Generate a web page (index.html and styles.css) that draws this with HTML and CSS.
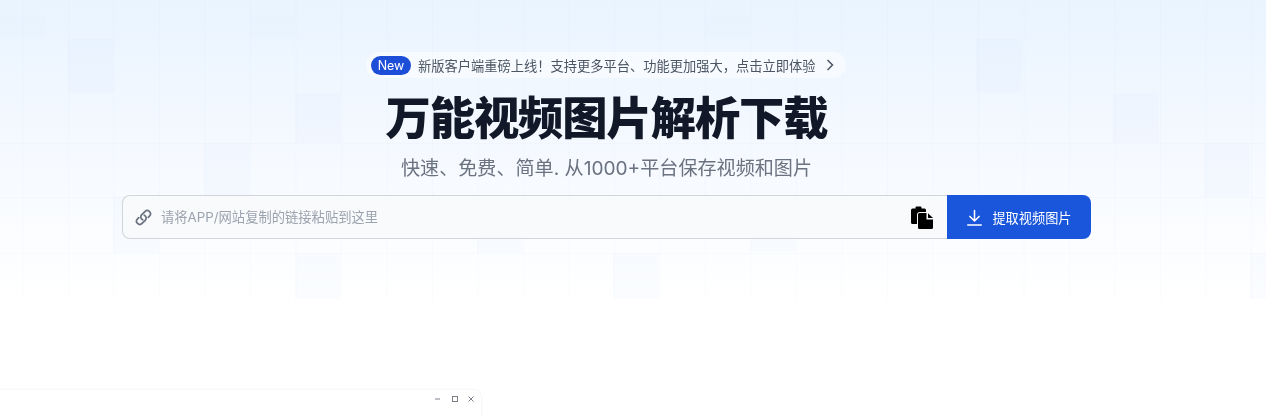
FILE: index.html
```html
<!DOCTYPE html>
<html lang="zh-CN">
<head>
    <meta charset="UTF-8">
    <meta name="viewport" content="width=device-width, initial-scale=1.0">
    <title>万能视频图片解析下载</title>
    <link rel="stylesheet" href="styles.css">
</head>
<body>

<section class="hero">
    <div class="hero-inner">
        <a class="notice" href="#">
            <span class="notice-badge">New</span>
            <span class="notice-text">新版客户端重磅上线！支持更多平台、功能更加强大，点击立即体验</span>
            <svg class="notice-arrow" viewBox="0 0 10 14" fill="none" stroke="currentColor" stroke-width="1.5">
                <path d="M2.5 2l5 5-5 5"/>
            </svg>
        </a>

        <h1>万能视频图片解析下载</h1>
        <p class="subtitle">快速、免费、简单. 从1000+平台保存视频和图片</p>

        <form class="search">
            <div class="search-box">
                <svg class="link-icon" viewBox="0 0 24 24" fill="none" stroke="currentColor" stroke-width="2.4" stroke-linecap="round" stroke-linejoin="round">
                    <path d="M13.19 8.688a4.5 4.5 0 0 1 1.242 7.244l-4.5 4.5a4.5 4.5 0 0 1-6.364-6.364l1.757-1.757m13.35-.622 1.757-1.757a4.5 4.5 0 0 0-6.364-6.364l-4.5 4.5a4.5 4.5 0 0 0 1.242 7.244"/>
                </svg>
                <input class="search-input" type="text" placeholder="请将APP/网站复制的链接粘贴到这里">
                <svg class="paste-icon" viewBox="0 0 22 23" fill="currentColor">
                    <path d="M1.5 2.500H4.500V1.500a1 1 0 0 1 1-1h4a1 1 0 0 1 1 1v1h3a1.500 1.500 0 0 1 1.500 1.500V6H9A3 3 0 0 0 6 9v9H1.500A1.500 1.500 0 0 1 0 16.500V4A1.500 1.500 0 0 1 1.500 2.500z"/>
                    <path d="M8.500 7H15.500v6.500H22v8a1.500 1.500 0 0 1-1.500 1.500h-12A1.500 1.500 0 0 1 7 21.500v-13A1.500 1.500 0 0 1 8.500 7z"/>
                    <path d="M17 7.200 22 12h-5z"/>
                </svg>
            </div>
            <button class="search-btn" type="button">
                <svg class="download-icon" viewBox="0 0 24 24" fill="none" stroke="currentColor" stroke-width="2.2" stroke-linecap="round" stroke-linejoin="round">
                    <path d="M12 2v15M5.500 10.500l6.500 6.500 6.500-6.500M2.500 22.500h19"/>
                </svg>
                提取视频图片
            </button>
        </form>
    </div>
</section>

<div class="mini-window">
    <div class="window-controls">
        <svg viewBox="0 0 8 8" fill="none" stroke="currentColor"><path d="M1 4h5"/></svg>
        <svg viewBox="0 0 8 8" fill="none" stroke="currentColor"><rect x="1.500" y="1.500" width="5" height="5"/></svg>
        <svg viewBox="0 0 8 8" fill="none" stroke="currentColor"><path d="M1.500 1.500l5 5M6.500 1.500l-5 5"/></svg>
    </div>
</div>

</body>
</html>
```

FILE: styles.css
```css
* {
    box-sizing: border-box;
}
body {
    margin: 0;
    height: 417px;
    overflow: hidden;
    background: #fff;
    font-family: Inter, "Noto Sans CJK SC", sans-serif;
}

/* the faint grid: lines first, then the tinted cells, then the fade */
.hero {
    --line: rgba(120, 150, 200, 0.03);
    --cell: rgba(80, 140, 245, 0.025);
    --cell-faint: rgba(80, 140, 245, 0.012);
    height: 299px;
    padding-top: 52px;
    background-color: #fff;
    background-image:
        linear-gradient(var(--line), var(--line)),
        linear-gradient(var(--line), var(--line)),
        linear-gradient(var(--line), var(--line)),
        linear-gradient(90deg, var(--line) 1px, transparent 1px),
        linear-gradient(var(--cell), var(--cell)),
        linear-gradient(var(--cell), var(--cell)),
        linear-gradient(var(--cell), var(--cell)),
        linear-gradient(var(--cell), var(--cell)),
        linear-gradient(var(--cell), var(--cell)),
        linear-gradient(var(--cell), var(--cell)),
        linear-gradient(var(--cell), var(--cell)),
        linear-gradient(var(--cell), var(--cell)),
        linear-gradient(var(--cell), var(--cell)),
        linear-gradient(var(--cell), var(--cell)),
        linear-gradient(var(--cell), var(--cell)),
        linear-gradient(var(--cell), var(--cell)),
        linear-gradient(var(--cell-faint), var(--cell-faint)),
        linear-gradient(var(--cell-faint), var(--cell-faint)),
        linear-gradient(var(--cell-faint), var(--cell-faint)),
        linear-gradient(180deg, #e9f4ff 0%, #f5f9ff 50%, #fff 100%);
    background-repeat:
        no-repeat, no-repeat, no-repeat, repeat-x,
        no-repeat, no-repeat, no-repeat, no-repeat, no-repeat, no-repeat,
        no-repeat, no-repeat, no-repeat, no-repeat, no-repeat, no-repeat,
        no-repeat, no-repeat, no-repeat,
        no-repeat;
    background-size:
        100% 1px, 100% 1px, 100% 1px, 45.5px 100%,
        45.5px 54px, 45.5px 54px, 45.5px 56px, 45.5px 46px, 45.5px 46px, 45.5px 50px,
        45.5px 54px, 45.5px 54px, 45.5px 50px, 45.5px 54px, 45.5px 56px, 45.5px 46px,
        45.5px 23px, 45.5px 23px, 45.5px 23px,
        100% 100%;
    background-position:
        0 143px, 0 197px, 0 253px, 22.5px 0,
        68px 39px, 204px 143px, 113px 197px, 295px 253px, 613px 253px, 295px 93px,
        1204px 143px, 976px 39px, 1113px 93px, 750px 197px, 477px 197px, 1250px 253px,
        250px 15px, 0 15px, 704px 15px,
        0 0;
}
.hero-inner {
    width: 969px;
    margin-left: 122px;
    display: flex;
    flex-direction: column;
    align-items: center;
    will-change: transform;
}

.notice {
    align-self: flex-start;
    width: 480px;
    height: 26px;
    margin-left: 244px;
    padding: 0 11px 0 5px;
    display: flex;
    align-items: center;
    border-radius: 13px;
    background: rgba(255, 255, 255, 0.5);
    color: #4b5563;
    text-decoration: none;
}
.notice-badge {
    width: 40px;
    height: 19px;
    margin-right: 7px;
    border-radius: 10px;
    background: #1d4ed8;
    color: #fff;
    font-size: 12.5px;
    font-weight: 400;
    line-height: 19px;
    text-align: center;
}
.notice-text {
    font-size: 13.25px;
    white-space: nowrap;
}
.notice-arrow {
    width: 10px;
    height: 14px;
    margin-left: auto;
}

h1 {
    margin: 12px 0 0;
    color: #111827;
    font-size: 45.3px;
    font-weight: 800;
    letter-spacing: -1.1px;
    line-height: 58px;
}
.subtitle {
    margin: 6px 0 0;
    color: #6b7280;
    font-size: 19.1px;
    line-height: 28px;
}

.search {
    width: 100%;
    height: 44px;
    margin-top: 13px;
    display: flex;
}
.search-box {
    flex: 1;
    display: flex;
    align-items: center;
    padding: 0 14px 0 12px;
    background: #f9fafb;
    border: 1px solid #d1d5db;
    border-right: none;
    border-radius: 8px 0 0 8px;
}
.link-icon {
    width: 17px;
    height: 17px;
    color: #6b7280;
}
.search-input {
    flex: 1;
    min-width: 0;
    margin-left: 9px;
    padding: 0;
    border: none;
    outline: none;
    background: transparent;
    font-family: inherit;
    font-size: 13.3px;
}
.search-input::placeholder {
    color: #9ca3af;
    opacity: 1;
}
.paste-icon {
    width: 22px;
    height: 23px;
    color: #000;
}
.search-btn {
    width: 144px;
    display: flex;
    align-items: center;
    justify-content: center;
    gap: 9px;
    padding: 0;
    border: none;
    border-radius: 0 8px 8px 0;
    background: #1a56db;
    color: #fff;
    font-family: inherit;
    font-size: 13.2px;
    cursor: pointer;
}
.download-icon {
    width: 17px;
    height: 17px;
}

.mini-window {
    width: 481px;
    height: 40px;
    margin-top: 91px;
    padding: 5px 6px 0 0;
    background: #fff;
    border-radius: 0 8px 0 0;
    box-shadow: 0 0 3px rgba(0, 0, 0, 0.09);
}
.window-controls {
    display: flex;
    justify-content: flex-end;
    gap: 8.5px;
    color: #7b8088;
}
.window-controls svg {
    width: 8px;
    height: 8px;
}
```
